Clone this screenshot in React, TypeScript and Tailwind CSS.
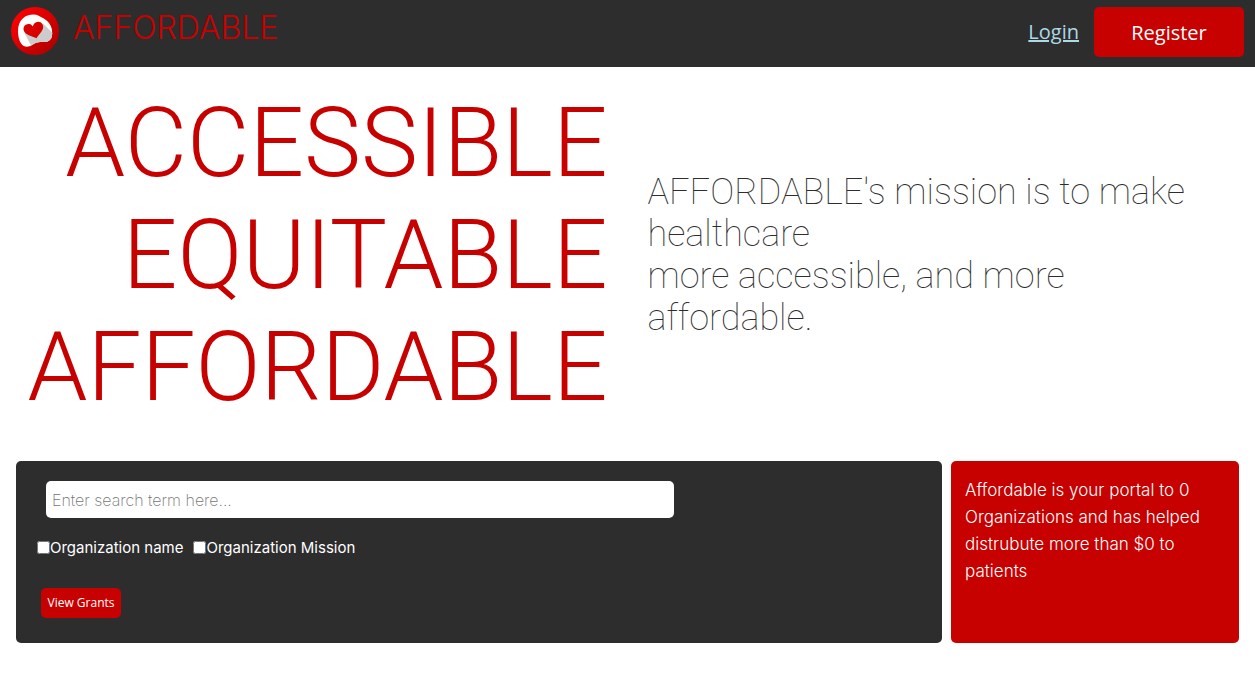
import React from "react";

function LogoMark() {
  return (
    <svg viewBox="0 0 48 48" className="size-12 shrink-0" aria-hidden="true">
      <defs>
        <linearGradient id="disc" x1="0.1" y1="0.1" x2="0.9" y2="0.9">
          <stop offset="0" stopColor="#ff0000" />
          <stop offset="1" stopColor="#b00000" />
        </linearGradient>
        <clipPath id="blob">
          <path d="M7 24C7 13 14 7.400 22.500 7.400 26.500 7.400 29 9.500 32.300 11.300 37.500 14.300 41.200 19 41.200 26 41.200 31.500 39 34.500 34.500 34.900 31.500 35.100 28 34.500 25 35.800 21.800 37.500 19.500 40 15.500 39.800 9.500 39.200 7 31.500 7 24Z" />
        </clipPath>
      </defs>
      <circle cx="24" cy="24" r="24" fill="url(#disc)" />
      <g clipPath="url(#blob)">
        <rect width="48" height="48" fill="#ffffff" />
        <path d="M13.500 26 32 16.500 48 32v16H25Z" fill="#cccccc" />
      </g>
      <path
        d="M25.500 31.200C21 29 14 28.200 12.700 23.300c-1-4 2.300-7 5.600-6.300 1.700.3 2.800 1.300 3.500 2.600.5-2.800 2.500-4.700 5.200-4.800 3.700-.1 6 3.400 4.900 7-1 3.300-4 5.700-6.400 9.400Z"
        fill="#d90000"
      />
    </svg>
  );
}

function Header() {
  return (
    <header className="flex h-[67px] items-start justify-between bg-[#2d2d2d] px-[11px] pt-[7px]">
      <a href="#" className="flex items-start gap-[14px]">
        <LogoMark />
        <span className="font-[Inter] text-[32px] leading-[42px] font-light text-[#c70000]">AFFORDABLE</span>
      </a>
      <nav className="flex items-center gap-[15px] font-['Open_Sans'] text-xl">
        <a href="#login" className="text-[#add8e6] underline">
          Login
        </a>
        <button type="button" className="h-[50px] w-[150px] rounded-[5px] bg-[#c70000] pt-0.5 text-white">
          Register
        </button>
      </nav>
    </header>
  );
}

function Hero() {
  return (
    <section className="grid grid-cols-2 items-center gap-x-10 pt-5">
      <h1 className="text-right text-[96px] leading-[112px] font-light text-[#c70000]">
        ACCESSIBLE
        <br />
        EQUITABLE
        <br />
        AFFORDABLE
      </h1>
      <p className="pr-10 text-[36px] leading-[42px] font-thin text-[#2d2d2d]">
        AFFORDABLE's mission is to make healthcare
        <br />
        more accessible, and more affordable.
      </p>
    </section>
  );
}

function CheckOption({ label }: { label: string }) {
  return (
    <label className="flex items-center">
      <input type="checkbox" className="size-[13px]" />
      {label}
    </label>
  );
}

function SearchPanel() {
  return (
    <form className="flex flex-1 flex-col items-start rounded-[5px] bg-[#2d2d2d] px-[21px] pt-5 pb-[25px] text-white">
      <input
        type="text"
        aria-label="Search term"
        placeholder="Enter search term here..."
        className="ml-[9px] h-[37px] w-[71%] rounded-[5px] bg-white px-1.5 text-base font-extralight text-black placeholder:text-[#757575]"
      />
      <div className="mt-4 flex gap-2.5 text-[15px] leading-[27px] font-normal">
        <CheckOption label="Organization name" />
        <CheckOption label="Organization Mission" />
      </div>
      <button
        type="button"
        className="mt-[27px] ml-1 h-[30px] w-20 rounded-[5px] bg-[#c70000] font-['Open_Sans'] text-xs"
      >
        View Grants
      </button>
    </form>
  );
}

export default function App() {
  return (
    <div className="min-h-screen bg-white font-[Roboto,sans-serif]">
      <Header />
      <main>
        <Hero />
        <section className="mt-[38px] flex gap-[9px] px-4 font-[Inter,sans-serif]">
          <SearchPanel />
          <aside className="w-72 rounded-[5px] bg-[#c70000] px-3.5 py-4 text-[17px] leading-[27px] font-light text-white">
            Affordable is your portal to 0 Organizations and has helped distrubute more than $0 to patients
          </aside>
        </section>
      </main>
    </div>
  );
}
